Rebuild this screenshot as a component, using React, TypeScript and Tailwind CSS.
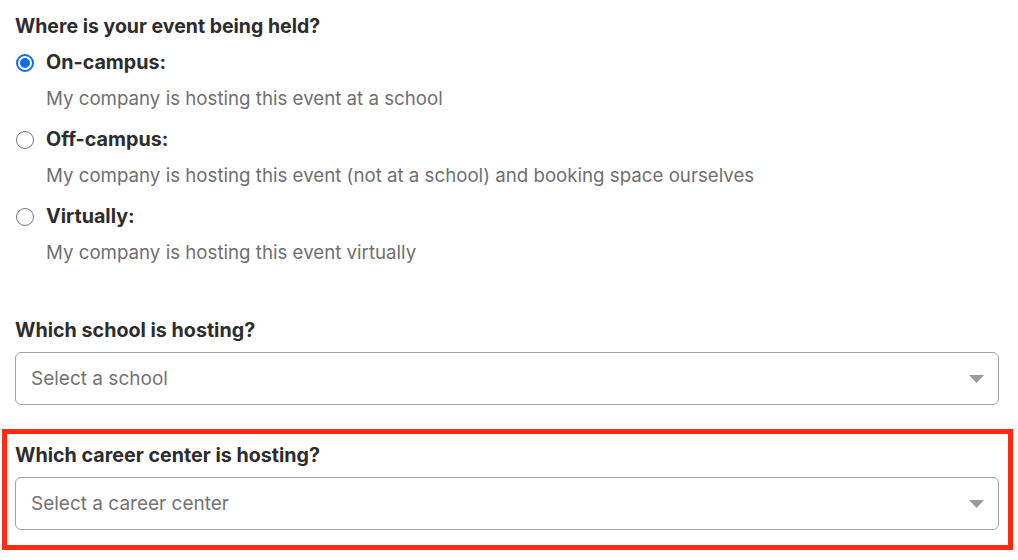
import React from "react";

const font = { fontFamily: "Inter, 'Noto Sans', sans-serif" };

function Radio({ checked }: { checked?: boolean }) {
  return checked ? (
    <span className="ml-[1px] flex h-[18px] w-[18px] shrink-0 items-center justify-center rounded-full border-[2px] border-[#0b6cf5] bg-white">
      <span className="h-[10px] w-[10px] rounded-full bg-[#0b6cf5]" />
    </span>
  ) : (
    <span className="ml-[1px] h-[18px] w-[18px] shrink-0 rounded-full border border-[#767676] bg-white" />
  );
}

function Option({ label, desc, checked }: { label: string; desc: string; checked?: boolean }) {
  return (
    <div className="mb-[5px]">
      <div className="flex h-[36px] items-center gap-[12px] pt-[2px]">
        <Radio checked={checked} />
        <span className="text-[19.7px] font-bold text-[#2d2d2d]">{label}</span>
      </div>
      <div className="flex h-[36px] items-center pl-[31px] pt-[2px] text-[18.7px] text-[#6f6f6f]">{desc}</div>
    </div>
  );
}

function Select({ placeholder }: { placeholder: string }) {
  return (
    <div className="flex h-[53px] items-center justify-between rounded-[6px] border border-[#a3a3a3] bg-white pl-[15px] pr-[14px]">
      <span className="pt-[2px] text-[19px] text-[#737373]">{placeholder}</span>
      <svg width="15" height="8" viewBox="0 0 15 8">
        <path d="M0 0 L15 0 L7.5 8 Z" fill="#9a9a9a" />
      </svg>
    </div>
  );
}

export default function App() {
  return (
    <div className="min-h-[560px] w-[1018px] bg-white" style={font}>
      <div className="ml-[15px] w-[984px] pt-[14px]">
        <div className="mb-[6px] h-[24px] text-[19.5px] font-bold leading-[24px] text-[#2d2d2d]">
          Where is your event being held?
        </div>
        <Option checked label="On-campus:" desc="My company is hosting this event at a school" />
        <Option label="Off-campus:" desc="My company is hosting this event (not at a school) and booking space ourselves" />
        <Option label="Virtually:" desc="My company is hosting this event virtually" />
        <div className="mt-[48px] mb-[10px] h-[24px] text-[19.7px] font-bold leading-[24px] text-[#2d2d2d]">
          Which school is hosting?
        </div>
        <Select placeholder="Select a school" />
        <div className="ml-[-13px] mt-[24px] w-[1011px] border-[5px] border-[#ff2a14] pb-[15px] pl-[8px] pr-[9px] pt-[9px]">
          <div className="mb-[10px] h-[24px] text-[19.7px] font-bold leading-[24px] text-[#2d2d2d]">
            Which career center is hosting?
          </div>
          <Select placeholder="Select a career center" />
        </div>
      </div>
    </div>
  );
}
